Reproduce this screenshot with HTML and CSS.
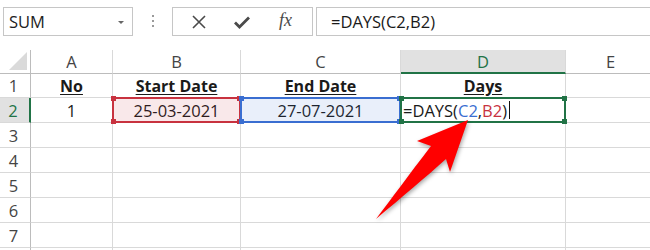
FILE: index.html
```html
<!DOCTYPE html>
<html>
<head>
<meta charset="utf-8">
<link rel="stylesheet" href="styles.css">
</head>
<body>
<div class="toolbar">
  <div class="namebox"><span>SUM</span><span class="dd"></span></div>
  <div class="dots"><i></i><i></i><i></i></div>
  <div class="buttons">
    <svg class="ico" width="16" height="16" viewBox="0 0 16 16"><path d="M2 2 L14 14 M14 2 L2 14" stroke="#4a4a4a" stroke-width="1.6" fill="none"/></svg>
    <svg class="ico" width="18" height="16" viewBox="0 0 18 16"><path d="M2 8.5 L6.5 13 L16 3.5" stroke="#4a4a4a" stroke-width="2.8" fill="none"/></svg>
    <span class="fx">fx</span>
  </div>
  <div class="formula">=DAYS(C2,B2)</div>
</div>
<div class="sheet">
  <div class="corner"><span class="tri"></span></div>
  <div class="ch">A</div>
  <div class="ch">B</div>
  <div class="ch">C</div>
  <div class="ch active">D</div>
  <div class="ch">E</div>

  <div class="rh">1</div>
  <div class="c center bold">No</div>
  <div class="c center bold">Start Date</div>
  <div class="c center bold">End Date</div>
  <div class="c center bold">Days</div>
  <div class="c"></div>

  <div class="rh active">2</div>
  <div class="c center">1</div>
  <div class="c center selcell"><span class="sel red"><b class="h tl"></b><b class="h tr"></b><b class="h bl"></b><b class="h br"></b></span>25-03-2021</div>
  <div class="c center selcell"><span class="sel blue"><b class="h tl"></b><b class="h tr"></b><b class="h bl"></b><b class="h br"></b></span>27-07-2021</div>
  <div class="c selcell edit"><span class="sel green"><b class="h tl"></b><b class="h tr"></b><b class="h bl"></b><b class="h br"></b></span>=DAYS(<span class="refc">C2</span>,<span class="refb">B2</span>)<span class="caret"></span></div>
  <div class="c"></div>

  <div class="rh">3</div><div class="c"></div><div class="c"></div><div class="c"></div><div class="c"></div><div class="c"></div>
  <div class="rh">4</div><div class="c"></div><div class="c"></div><div class="c"></div><div class="c"></div><div class="c"></div>
  <div class="rh">5</div><div class="c"></div><div class="c"></div><div class="c"></div><div class="c"></div><div class="c"></div>
  <div class="rh">6</div><div class="c"></div><div class="c"></div><div class="c"></div><div class="c"></div><div class="c"></div>
  <div class="rh">7</div><div class="c"></div><div class="c"></div><div class="c"></div><div class="c"></div><div class="c"></div>
  <div class="rh"></div><div class="c"></div><div class="c"></div><div class="c"></div><div class="c"></div><div class="c"></div>
</div>
<svg class="arrow" width="650" height="250" viewBox="0 0 650 250">
  <path d="M468 120 L417 141 L431 146 C408 176 392 198 376 219 C402 197 426 177 446 159 L450 172 Z" fill="#ff0000"/>
</svg>
</body>
</html>
```
FILE: styles.css
```css
* { box-sizing: border-box; }
html, body { margin: 0; padding: 0; background: #fff; overflow: hidden; }
body {
  width: 650px; height: 250px; position: relative;
  font-family: "Open Sans", "Noto Sans", sans-serif;
  font-size: 16.5px; color: #1a1a1a;
}
.toolbar {
  display: flex; align-items: stretch;
  height: 36px; padding-top: 7px; padding-left: 3px;
}
.namebox {
  width: 130px; border: 1px solid #c6c6c6; display: flex; align-items: center;
  justify-content: space-between; padding: 0 8px 0 5px; color: #222;
}
.dd { width: 0; height: 0; border-left: 3px solid transparent; border-right: 3px solid transparent; border-top: 3px solid #666; margin-top: 1px; }
.dots { width: 39px; display: flex; flex-direction: column; align-items: center; justify-content: center; gap: 3px; padding-bottom: 2px; }
.dots i { width: 2px; height: 2px; background: #9a9a9a; display: block; }
.buttons {
  width: 141px; border: 1px solid #c6c6c6; display: flex; align-items: center;
  padding-left: 18px; gap: 0;
}
.buttons .ico:first-child { margin-right: 26px; }
.buttons .ico:nth-child(2) { margin-right: 28px; }
.fx { font-family: "Liberation Serif", serif; font-style: italic; font-size: 18px; color: #4a4a4a; margin-top: -2px; }
.formula {
  flex: 1; margin-left: 3px; border: 1px solid #c6c6c6; border-right: none;
  display: flex; align-items: center; padding-left: 14px; color: #1a1a1a;
}
.sheet {
  margin-top: 14px;
  display: grid;
  grid-template-columns: 31px 82px 128px 160px 165px 90px;
  grid-template-rows: 24px 24px 25px 25px 25px 25px 25px 25px 25px;
}
.corner { border-right: 1px solid #bcbcbc; border-bottom: 1px solid #bcbcbc; position: relative; }
.tri { position: absolute; right: 3px; bottom: 3px; width: 0; height: 0; border-left: 18px solid transparent; border-bottom: 18px solid #dadada; }
.ch {
  border-right: 1px solid #d9d9d9; border-bottom: 1px solid #bcbcbc;
  display: flex; align-items: center; justify-content: center; color: #444; font-size: 16.5px;
}
.ch.active { background: #e1e1e1; color: #217346; border-bottom: 2px solid #217346; }
.rh {
  border-right: 1px solid #bcbcbc; border-bottom: 1px solid #d9d9d9;
  display: flex; align-items: center; justify-content: center; color: #444; padding-right: 3px;
}
.rh.active { background: #e1e1e1; color: #217346; border-right: 2px solid #217346; }
.c { border-right: 1px solid #d9d9d9; border-bottom: 1px solid #d9d9d9; display: flex; align-items: center; white-space: nowrap; }
.center { justify-content: center; }
.bold { font-weight: 700; text-decoration: underline; text-underline-offset: 2px; font-size: 16px; }
.selcell { position: relative; }
.sel { position: absolute; left: -1px; top: -1px; right: -1px; bottom: -1px; border: 2px solid; pointer-events: none; }
.sel.red { border-color: #c8323f; background: rgba(200,50,63,0.11); }
.sel.blue { border-color: #3a6ed1; background: rgba(58,110,209,0.11); }
.sel.green { border-color: #217346; }
.h { position: absolute; width: 5px; height: 5px; background: inherit; }
.sel.red .h { background: #c8323f; }
.sel.blue .h { background: #3a6ed1; }
.sel.green .h { background: #217346; }
.h.tl { left: -3px; top: -3px; }
.h.tr { right: -3px; top: -3px; }
.h.bl { left: -3px; bottom: -3px; }
.h.br { right: -3px; bottom: -3px; }
.edit { padding-left: 2px; }
.refc { color: #3a6ed1; }
.refb { color: #c8323f; }
.caret { display: inline-block; width: 1px; height: 18px; background: #111; margin-left: 2px; }
.arrow { position: absolute; left: 0; top: 0; filter: drop-shadow(1px 2px 2px rgba(0,0,0,0.35)); }
```
